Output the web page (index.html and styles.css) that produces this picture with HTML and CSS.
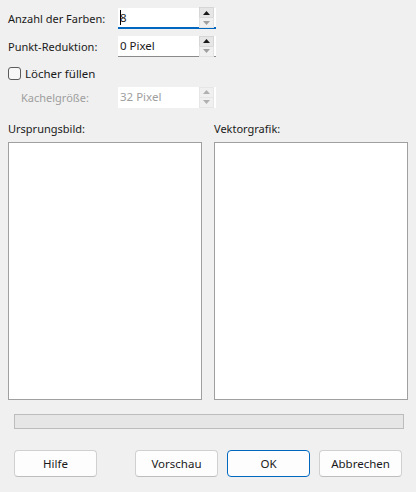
FILE: index.html
```html
<!DOCTYPE html>
<html lang="de">
<head>
<meta charset="utf-8">
<title>Vektorisieren</title>
<link rel="stylesheet" href="styles.css">
</head>
<body>
<div class="dialog">
  <div class="form-row">
    <span class="label">Anzahl der Farben:</span>
    <div class="spin focused">
      <span class="value"><span class="caret"></span>8</span>
      <div class="spin-btns">
        <span class="sb up"><svg width="7" height="4" viewBox="0 0 7 4"><path d="M0 4 L3.5 0 L7 4 Z"/></svg></span>
        <span class="sb down"><svg width="7" height="4" viewBox="0 0 7 4"><path d="M0 0 L3.5 4 L7 0 Z"/></svg></span>
      </div>
    </div>
  </div>
  <div class="form-row">
    <span class="label">Punkt-Reduktion:</span>
    <div class="spin">
      <span class="value">0 Pixel</span>
      <div class="spin-btns">
        <span class="sb up"><svg width="7" height="4" viewBox="0 0 7 4"><path d="M0 4 L3.5 0 L7 4 Z"/></svg></span>
        <span class="sb down"><svg width="7" height="4" viewBox="0 0 7 4"><path d="M0 0 L3.5 4 L7 0 Z"/></svg></span>
      </div>
    </div>
  </div>
  <div class="check-row">
    <span class="checkbox"></span>
    <span class="check-label">Löcher füllen</span>
  </div>
  <div class="form-row disabled">
    <span class="label indent">Kachelgröße:</span>
    <div class="spin">
      <span class="value">32 Pixel</span>
      <div class="spin-btns">
        <span class="sb up"><svg width="7" height="4" viewBox="0 0 7 4"><path d="M0 4 L3.5 0 L7 4 Z"/></svg></span>
        <span class="sb down"><svg width="7" height="4" viewBox="0 0 7 4"><path d="M0 0 L3.5 4 L7 0 Z"/></svg></span>
      </div>
    </div>
  </div>

  <div class="previews">
    <span class="plabel">Ursprungsbild:</span>
    <span class="plabel">Vektorgrafik:</span>
    <div class="pbox"></div>
    <div class="pbox"></div>
  </div>

  <div class="progress"></div>

  <div class="buttons">
    <button class="btn">Hilfe</button>
    <button class="btn push">Vorschau</button>
    <button class="btn default">OK</button>
    <button class="btn">Abbrechen</button>
  </div>
</div>
</body>
</html>
```
FILE: styles.css
```css
html, body {
  margin: 0;
  padding: 0;
  background: #f0f0f0;
}
body {
  width: 416px;
  height: 492px;
  overflow: hidden;
  font-family: "Noto Sans", "Open Sans", sans-serif;
  font-size: 11px;
  color: #1a1a1a;
}
.dialog {
  display: flex;
  flex-direction: column;
  padding: 8px 9px 0 8px;
}
.form-row {
  display: grid;
  grid-template-columns: 110px 98px;
  align-items: center;
  height: 21px;
  margin-bottom: 7px;
}
.label.indent {
  padding-left: 13px;
}
.disabled .label,
.disabled .value {
  color: #9e9e9e;
}
.spin {
  display: flex;
  align-items: center;
  height: 21px;
  background: #ffffff;
  border-bottom: 1px solid #8a8a8a;
  box-sizing: border-box;
  padding-right: 2px;
}
.spin.focused {
  border-bottom: 2px solid #0067c0;
}
.disabled .spin {
  border-bottom: 1px solid #ffffff;
}
.value {
  flex: 1;
  padding-left: 2px;
  display: flex;
  align-items: center;
  line-height: 16px;
  font-size: 11.5px;
}
.caret {
  display: inline-block;
  width: 1px;
  height: 15px;
  background: #000;
  margin-right: -1px;
}
.spin-btns {
  display: flex;
  flex-direction: column;
  width: 15px;
}
.sb {
  height: 9px;
  display: flex;
  align-items: center;
  justify-content: center;
}
.sb.up {
  background: #e6e6e6;
  border: 1px solid #d6d6d6;
  border-bottom: none;
}
.sb.up svg { fill: #1a1a1a; }
.sb.down {
  background: #f0f0f0;
  border: 1px solid #e2e2e2;
  border-top: 1px solid #dadada;
}
.sb.down svg { fill: #a0a0a0; }
.disabled .sb.up,
.disabled .sb.down {
  background: #f0f0f0;
  border-color: #e6e6e6;
}
.disabled .sb svg { fill: #b0b0b0; }

.check-row {
  display: flex;
  align-items: center;
  gap: 4px;
  height: 16px;
  margin: 1px 0 6px 0;
}
.checkbox {
  width: 11px;
  height: 11px;
  border: 1px solid #5c5c5c;
  border-radius: 3px;
  background: #f7f7f7;
}
.check-label {
  font-size: 11.5px;
}

.previews {
  display: grid;
  grid-template-columns: 194px 194px;
  column-gap: 12px;
  grid-template-rows: 18px 258px;
  row-gap: 4px;
  margin-top: 5px;
}
.plabel {
  line-height: 18px;
}
.pbox {
  background: #ffffff;
  border: 1px solid #a0a0a0;
  box-sizing: border-box;
}

.progress {
  margin: 14px 3px 0 6px;
  height: 15px;
  box-sizing: border-box;
  background: #e6e6e6;
  border: 1px solid #bcbcbc;
}

.buttons {
  display: flex;
  margin: 21px 5px 0 6px;
  gap: 9px;
}
.btn {
  width: 83px;
  height: 27px;
  box-sizing: border-box;
  font-family: inherit;
  font-size: 11.5px;
  color: #1a1a1a;
  background: #fdfdfd;
  border: 1px solid #d0d0d0;
  border-bottom-color: #bdbdbd;
  border-radius: 4px;
  padding: 0;
}
.btn.push {
  margin-left: auto;
}
.btn.default {
  border: 1px solid #0067c0;
}
```
